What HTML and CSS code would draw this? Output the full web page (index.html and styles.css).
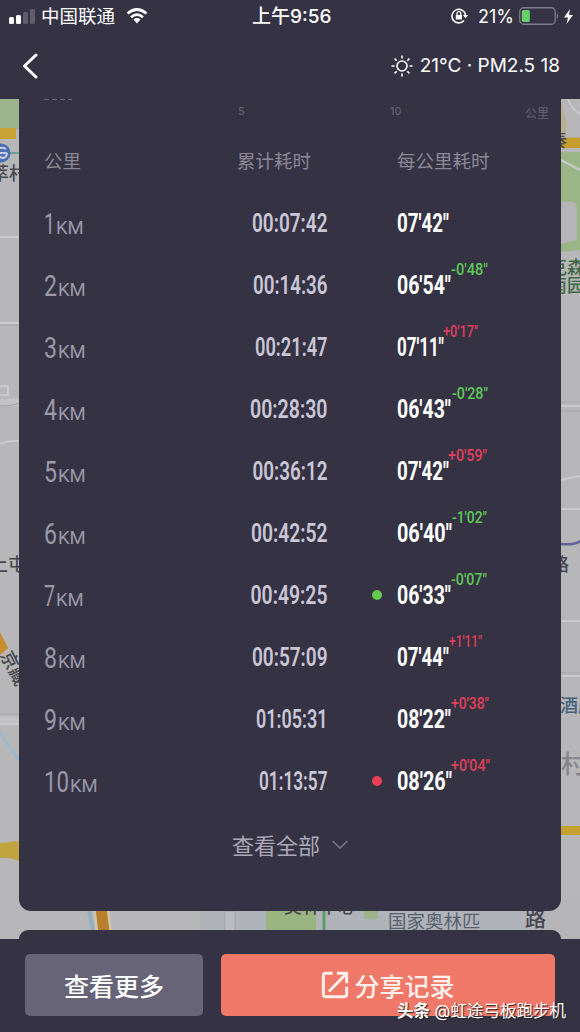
FILE: index.html
```html
<!DOCTYPE html>
<html lang="zh-CN">

<head>
    <meta charset="UTF-8">
    <meta name="viewport" content="width=device-width, initial-scale=1.0">
    <title>跑步记录</title>
    <link rel="stylesheet" href="styles.css">
</head>

<body>
    <!-- map behind the cards -->
    <svg class="map" width="580" height="1032" viewBox="0 0 580 1032">
        <rect width="580" height="1032" fill="#b7b7ba" />
        <path d="M0 99H19V129H0Z" fill="#9cb58c" />
        <path d="M0 128H16V139H0Z" fill="#c9a336" />
        <path d="M9 153H19" stroke="#6ba491" stroke-width="2" />
        <circle cx="1" cy="153" r="9.5" fill="#4b6fb5" />
        <path d="M-3 150Q1 146 6 149M7 153H0Q-3 157 3 158Q7 157 7 153" fill="none" stroke="#c8cde0" stroke-width="2" />
        <path d="M0 237H19M0 323H19M0 386H8V395H0M0 444Q10 440 19 441M0 724H19" fill="none" stroke="#cacacc" stroke-width="2" />
        <path d="M0 402H19M0 720H19" stroke="#c2c2c5" stroke-width="7" />
        <path d="M0 714H19M0 325H19M0 406Q12 406 19 403" fill="none" stroke="#a5a5a8" stroke-width="1" />
        <path d="M0 733L19 760" stroke="#9eb8cb" stroke-width="3" />
        <path d="M0 632L8 648L0 655Z" fill="#c88b2e" />
        <path d="M0 843L19 841V861Q10 857 0 858Z" fill="#c0a53f" />
        <!-- right side -->
        <path d="M561 152H580V250L561 252Z" fill="#9ab687" />
        <path d="M561 202Q577 200 577 207V240L561 244Z" fill="#b5b5b8" />
        <path d="M561 99L566 120V137H580V148H561Z" fill="#c2a15e" opacity=".45" />
        <path d="M561 138H580V148H561Z" fill="#c69d2f" />
        <path d="M568 99Q572 110 580 114M561 160L580 170M561 406H580M561 480L580 476M561 509H580M561 621H580M561 676H580" fill="none" stroke="#cacace" stroke-width="2" />
        <path d="M561 402H580M561 411H580M561 673H580" stroke="#a6a6a9" stroke-width="1" />
        <path d="M561 544Q576 545 580 541" fill="none" stroke="#65619a" stroke-width="2.5" />
        <path d="M561 826H580V835H561Z" fill="#c5a22f" />
        <!-- strip between the cards -->
        <path d="M200 911H580V939H200Z" fill="#b0b3b9" />
        <path d="M548 900H580V939H540Z" fill="#b5b5b8" />
        <path d="M89 910L93 932" stroke="#94afc0" stroke-width="4" />
        <path d="M101 908L104 932" stroke="#d1c6ae" stroke-width="16" />
        <path d="M101 908L104 932" stroke="#b8802c" stroke-width="11" />
        <path d="M225 911H235V932H225Z" fill="#bcbdc4" stroke="#a2a3a9" />
        <path d="M266 911H316V932H266Z" fill="#9bb582" />
        <path d="M324 911V932" stroke="#5f9b6c" stroke-width="3" />
        <path d="M364 911H378V919H364Z" fill="#9fb38a" />
        <g class="map-text">
            <text x="-9" y="180">萃村</text>
            <text x="-10" y="571">上屯</text>
            <text x="0" y="655" font-size="18" transform="rotate(63 0 655)">京藏</text>
            <text x="549" y="147">秦</text>
            <text x="549" y="274" class="green">克森</text>
            <text x="549" y="292" class="green">南园</text>
            <text x="551" y="571">路</text>
            <text x="560" y="712" class="blue">酒店</text>
            <text x="561" y="773" class="village">村</text>
            <text x="284" y="913">奥林中心</text>
            <text x="388" y="928" class="slate">国家奥林匹</text>
            <text x="525" y="926" font-size="21">路</text>
        </g>
    </svg>

    <div class="header">
        <div class="status">
            <svg class="signal" width="27" height="16" viewBox="0 0 27 16">
                <rect x="0" y="9" width="5" height="7" rx="1.5" fill="#fff" />
                <rect x="7" y="7" width="5" height="9" rx="1.5" fill="#fff" />
                <rect x="14" y="4" width="5" height="12" rx="1.5" fill="#5f5c6b" />
                <rect x="21" y="1" width="5" height="15" rx="1.5" fill="#5f5c6b" />
            </svg>
            <span class="carrier">中国联通</span>
            <svg class="wifi" width="22" height="16" viewBox="0 0 22 16">
                <path d="M1.5 5.5Q11-2.5 20.5 5.5M5 9.2Q11 4 17 9.2" fill="none" stroke="#fff" stroke-width="2.7" />
                <path d="M7.5 11.5Q11 8.7 14.5 11.5L11 15.5Z" fill="#fff" />
            </svg>
            <span class="clock">上午9:56</span>
            <div class="power">
                <svg class="lock" width="17" height="16" viewBox="0 0 17 16">
                    <path d="M13 12.500A6.800 6.800 0 1 1 14.500 7" fill="none" stroke="#fff" stroke-width="1.600" />
                    <path d="M12 7H17L14.500 10.500Z" fill="#fff" />
                    <path d="M4.800 7H11V11.500H4.800Z" fill="#fff" />
                    <path d="M6 7.500V5.500A1.900 1.900 0 0 1 9.800 5.500V7.500" fill="none" stroke="#fff" stroke-width="1.300" />
                </svg>
                <span class="percent">21%</span>
                <svg class="battery" width="41" height="18" viewBox="0 0 41 18">
                    <rect x=".75" y=".75" width="35.500" height="16.500" rx="4" fill="none" stroke="#807e8a" stroke-width="1.300" />
                    <rect x="2.800" y="3" width="8" height="12" rx="1.500" fill="#6ad06b" />
                    <path d="M38 6Q40.500 9 38 12Z" fill="#807e8a" />
                </svg>
                <svg class="bolt" width="9" height="15" viewBox="0 0 9 15">
                    <path d="M6 0L0 8.500H4L2.500 15L9 6H5Z" fill="#fff" />
                </svg>
            </div>
        </div>
        <div class="nav">
            <svg class="back" width="16" height="26" viewBox="0 0 16 26">
                <path d="M14 2L2.500 13L14 24" fill="none" stroke="#fff" stroke-width="3" stroke-linecap="round" stroke-linejoin="round" />
            </svg>
            <div class="weather">
                <svg width="22" height="22" viewBox="0 0 22 22" fill="none" stroke="#fff" stroke-width="1.600">
                    <circle cx="11" cy="11" r="5" />
                    <path d="M11 .5V3.500M11 18.500V21.500M.5 11H3.500M18.500 11H21.500M3.600 3.600L5.700 5.700M16.300 16.300L18.400 18.400M3.600 18.400L5.700 16.300M16.300 5.700L18.400 3.600" />
                </svg>
                <span>21°C · PM2.5 18</span>
            </div>
        </div>
    </div>

    <div class="card">
        <div class="axis">
            <i class="axis-dash"></i>
            <span class="tick five">5</span>
            <span class="tick ten">10</span>
            <span class="tick unit">公里</span>
        </div>
        <div class="row titles">
            <span>公里</span>
            <span>累计耗时</span>
            <span class="title-pace">每公里耗时</span>
        </div>

        <div class="row">
            <div class="km"><svg width="12" height="30"><text x="0" y="26" textLength="11" lengthAdjust="spacingAndGlyphs">1</text></svg>KM</div>
            <svg class="total" width="91" height="30"><text x="15" y="24" textLength="75.500" lengthAdjust="spacingAndGlyphs">00:07:42</text></svg>
            <i class="dot"></i>
            <svg class="pace" width="120" height="44"><text x="0" y="31" textLength="52" lengthAdjust="spacingAndGlyphs">07'42″</text></svg>
        </div>
        <div class="row">
            <div class="km"><svg width="14" height="30"><text x="0" y="26" textLength="13" lengthAdjust="spacingAndGlyphs">2</text></svg>KM</div>
            <svg class="total" width="91" height="30"><text x="16" y="24" textLength="74.500" lengthAdjust="spacingAndGlyphs">00:14:36</text></svg>
            <i class="dot"></i>
            <svg class="pace" width="120" height="44"><text x="0" y="31" textLength="54" lengthAdjust="spacingAndGlyphs">06'54″</text><text class="faster" x="54" y="12" textLength="37" lengthAdjust="spacingAndGlyphs">-0'48″</text></svg>
        </div>
        <div class="row">
            <div class="km"><svg width="14" height="30"><text x="0" y="26" textLength="13" lengthAdjust="spacingAndGlyphs">3</text></svg>KM</div>
            <svg class="total" width="91" height="30"><text x="18" y="24" textLength="72.500" lengthAdjust="spacingAndGlyphs">00:21:47</text></svg>
            <i class="dot"></i>
            <svg class="pace" width="120" height="44"><text x="0" y="31" textLength="47" lengthAdjust="spacingAndGlyphs">07'11″</text><text class="slower" x="46" y="12" textLength="35" lengthAdjust="spacingAndGlyphs">+0'17″</text></svg>
        </div>
        <div class="row">
            <div class="km"><svg width="14" height="30"><text x="0" y="26" textLength="13" lengthAdjust="spacingAndGlyphs">4</text></svg>KM</div>
            <svg class="total" width="91" height="30"><text x="13" y="24" textLength="77.500" lengthAdjust="spacingAndGlyphs">00:28:30</text></svg>
            <i class="dot"></i>
            <svg class="pace" width="120" height="44"><text x="0" y="31" textLength="54" lengthAdjust="spacingAndGlyphs">06'43″</text><text class="faster" x="55" y="12" textLength="36" lengthAdjust="spacingAndGlyphs">-0'28″</text></svg>
        </div>
        <div class="row">
            <div class="km"><svg width="14" height="30"><text x="0" y="26" textLength="13" lengthAdjust="spacingAndGlyphs">5</text></svg>KM</div>
            <svg class="total" width="91" height="30"><text x="15.500" y="24" textLength="75" lengthAdjust="spacingAndGlyphs">00:36:12</text></svg>
            <i class="dot"></i>
            <svg class="pace" width="120" height="44"><text x="0" y="31" textLength="52" lengthAdjust="spacingAndGlyphs">07'42″</text><text class="slower" x="51" y="12" textLength="39" lengthAdjust="spacingAndGlyphs">+0'59″</text></svg>
        </div>
        <div class="row">
            <div class="km"><svg width="14" height="30"><text x="0" y="26" textLength="13" lengthAdjust="spacingAndGlyphs">6</text></svg>KM</div>
            <svg class="total" width="91" height="30"><text x="14" y="24" textLength="76.500" lengthAdjust="spacingAndGlyphs">00:42:52</text></svg>
            <i class="dot"></i>
            <svg class="pace" width="120" height="44"><text x="0" y="31" textLength="55" lengthAdjust="spacingAndGlyphs">06'40″</text><text class="faster" x="55" y="12" textLength="35" lengthAdjust="spacingAndGlyphs">-1'02″</text></svg>
        </div>
        <div class="row">
            <div class="km"><svg width="12" height="30"><text x="0" y="26" textLength="11" lengthAdjust="spacingAndGlyphs">7</text></svg>KM</div>
            <svg class="total" width="91" height="30"><text x="13.500" y="24" textLength="77" lengthAdjust="spacingAndGlyphs">00:49:25</text></svg>
            <i class="dot best"></i>
            <svg class="pace" width="120" height="44"><text x="0" y="31" textLength="54" lengthAdjust="spacingAndGlyphs">06'33″</text><text class="faster" x="54" y="12" textLength="36" lengthAdjust="spacingAndGlyphs">-0'07″</text></svg>
        </div>
        <div class="row">
            <div class="km"><svg width="14" height="30"><text x="0" y="26" textLength="13" lengthAdjust="spacingAndGlyphs">8</text></svg>KM</div>
            <svg class="total" width="91" height="30"><text x="15" y="24" textLength="75.500" lengthAdjust="spacingAndGlyphs">00:57:09</text></svg>
            <i class="dot"></i>
            <svg class="pace" width="120" height="44"><text x="0" y="31" textLength="52" lengthAdjust="spacingAndGlyphs">07'44″</text><text class="slower" x="52" y="12" textLength="33" lengthAdjust="spacingAndGlyphs">+1'11″</text></svg>
        </div>
        <div class="row">
            <div class="km"><svg width="14" height="30"><text x="0" y="26" textLength="13" lengthAdjust="spacingAndGlyphs">9</text></svg>KM</div>
            <svg class="total" width="91" height="30"><text x="19" y="24" textLength="71.500" lengthAdjust="spacingAndGlyphs">01:05:31</text></svg>
            <i class="dot"></i>
            <svg class="pace" width="120" height="44"><text x="0" y="31" textLength="54" lengthAdjust="spacingAndGlyphs">08'22″</text><text class="slower" x="54" y="12" textLength="38" lengthAdjust="spacingAndGlyphs">+0'38″</text></svg>
        </div>
        <div class="row">
            <div class="km"><svg width="26" height="30"><text x="0" y="26" textLength="25" lengthAdjust="spacingAndGlyphs">10</text></svg>KM</div>
            <svg class="total" width="91" height="30"><text x="22" y="24" textLength="68.500" lengthAdjust="spacingAndGlyphs">01:13:57</text></svg>
            <i class="dot worst"></i>
            <svg class="pace" width="120" height="44"><text x="0" y="31" textLength="55" lengthAdjust="spacingAndGlyphs">08'26″</text><text class="slower" x="54" y="12" textLength="39" lengthAdjust="spacingAndGlyphs">+0'04″</text></svg>
        </div>

        <div class="show-all">
            <span>查看全部</span>
            <svg width="16" height="9" viewBox="0 0 16 9">
                <path d="M.7 1L8 8L15.300 1" fill="none" stroke="#7d7a89" stroke-width="1.300" />
            </svg>
        </div>
    </div>
    <div class="card next-card"></div>

    <div class="footer">
        <div class="btn more">查看更多</div>
        <div class="btn share">
            <svg width="28" height="28" viewBox="0 0 30 30" fill="none" stroke="#fff0ec" stroke-width="3.2">
                <path d="M12.500 2.500H5Q2.500 2.500 2.500 5V25Q2.500 27.500 5 27.500H25Q27.500 27.500 27.500 25V17" />
                <path d="M8.500 22L26 4M17 2.500H27.500V13" />
            </svg>
            <span>分享记录</span>
        </div>
    </div>
    <div class="watermark"><b>头条</b> @虹途弓板跑步机</div>
</body>

</html>
```
FILE: styles.css
```css
* {
    box-sizing: border-box;
}

body {
    font-family: 'Inter', 'Noto Sans CJK SC', sans-serif;
    margin: 0;
    width: 580px;
    height: 1032px;
    overflow: hidden;
    position: relative;
    display: flex;
    flex-direction: column;
    color: #fff;
}

svg {
    display: block;
    flex: none;
}

.map {
    position: absolute;
    top: 0;
    left: 0;
    z-index: -1;
}

.map-text {
    font-size: 18px;
    font-weight: 500;
    fill: #47474e;
}

.map-text .green {
    fill: #3d6844;
}

.map-text .blue {
    fill: #41617a;
}

.map-text .slate {
    fill: #58616f;
    font-size: 18.5px;
    font-weight: 400;
}

.map-text .village {
    fill: #85858a;
    font-size: 25px;
}

/* top bar */
.header {
    height: 99px;
    flex: none;
    background: #353244;
}

.status {
    height: 32px;
    display: flex;
    align-items: center;
    padding: 0 7px 0 9px;
    font-size: 18px;
    white-space: nowrap;
}

.signal {
    margin-top: -1px;
}

.carrier {
    margin: -2px 0 0 5px;
    font-size: 18.5px;
}

.wifi {
    margin-left: 11px;
}

.clock {
    margin: -3px 0 0 104px;
    font-size: 19px;
    font-weight: 500;
}

.power {
    margin-left: auto;
    display: flex;
    align-items: center;
}

.percent {
    margin: 0 5px 0 10px;
    font-size: 18px;
}

.bolt {
    margin-left: 4px;
}

.nav {
    height: 67px;
    display: flex;
    align-items: center;
    justify-content: space-between;
    padding: 0 20px 0 22px;
}

.weather {
    display: flex;
    align-items: center;
    gap: 7px;
    font-size: 19px;
    white-space: nowrap;
}

/* split table */
.card {
    margin: 0 19px;
    height: 812px;
    flex: none;
    background: #353244;
    border-radius: 0 0 12px 12px;
    overflow: hidden;
}

.axis {
    height: 31px;
    display: flex;
    padding-left: 25px;
    color: #666373;
    font-size: 11px;
    line-height: 14px;
}

.axis-dash {
    width: 28px;
    height: 1px;
    background: repeating-linear-gradient(90deg, #666373 0 5px, transparent 5px 8px);
}

.tick {
    padding-top: 5px;
}

.five {
    margin-left: 166px;
    width: 152px;
}

.ten {
    width: 135px;
}

.unit {
    font-size: 12px;
    padding-top: 8px;
}

.row {
    height: 62px;
    display: grid;
    grid-template-columns: 193px 90px 55px 1fr;
    padding-left: 25px;
    align-items: center;
}

.titles {
    color: #8a8796;
    font-size: 18.5px;
    line-height: 62px;
    white-space: nowrap;
}

.title-pace {
    grid-column: 4;
    margin-left: 15px;
}

.km {
    display: flex;
    height: 30px;
    color: #9b98a8;
    font-family: 'Roboto', sans-serif;
    font-size: 18.5px;
    line-height: 40px;
}

.km text {
    font-size: 30px;
    font-weight: 400;
    fill: #9b98a8;
}

.total {
    font-family: 'Roboto', sans-serif;
    font-size: 25px;
    font-weight: 600;
    fill: #c9c6d6;
}

.pace {
    margin-left: 15px;
    font-family: 'Roboto', sans-serif;
    font-size: 25px;
    font-weight: 700;
    fill: #fff;
}

.faster,
.slower {
    font-size: 16px;
    font-weight: 500;
    fill: #5fc956;
}

.slower {
    fill: #e0405a;
}

.dot {
    width: 10px;
    height: 10px;
    border-radius: 50%;
    justify-self: end;
}

.best {
    background: #66c94f;
}

.worst {
    background: #ec3f53;
}

.show-all {
    height: 64px;
    display: flex;
    align-items: center;
    justify-content: center;
    gap: 12px;
    color: #aaa7b7;
    font-size: 22px;
}

.next-card {
    margin-top: 19px;
    height: 9px;
    border-radius: 12px 12px 0 0;
}

/* bottom buttons */
.footer {
    flex: 1;
    background: #353244;
    display: flex;
    gap: 18px;
    padding: 15px 25px 15px;
}

.btn {
    height: 62px;
    border-radius: 5px;
    display: flex;
    align-items: center;
    justify-content: center;
    font-size: 25px;
    font-weight: 500;
    white-space: nowrap;
}

.more {
    width: 178px;
    background: #686477;
}

.share {
    flex: 1;
    background: #ef7868;
    color: #fff0ec;
    gap: 5px;
}

/* lies over the share button */
.watermark {
    position: absolute;
    right: 14px;
    bottom: 8px;
    font-size: 16.5px;
    line-height: 26px;
    white-space: nowrap;
    text-shadow: 1px 1px 1px #222;
}
```
